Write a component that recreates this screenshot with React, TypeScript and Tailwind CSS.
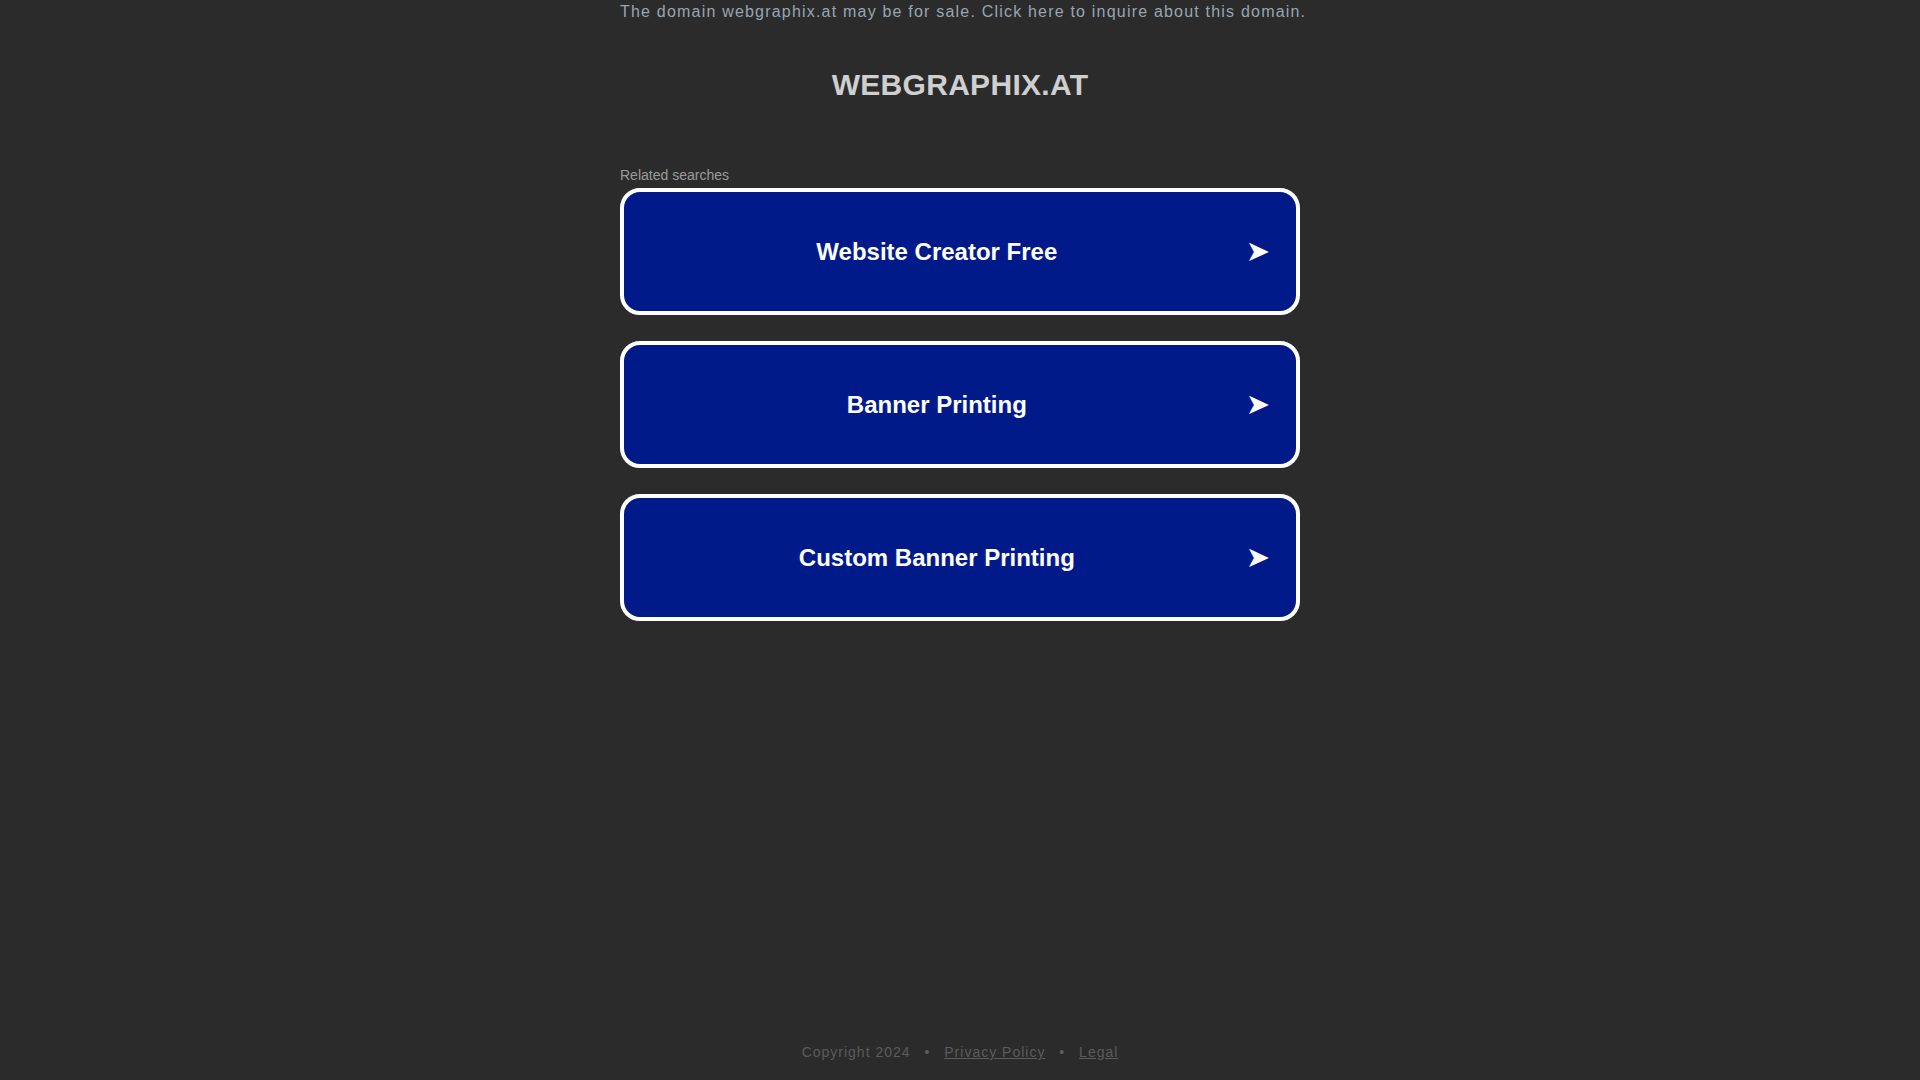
const searches = ['Website Creator Free', 'Banner Printing', 'Custom Banner Printing'];

const App = () => {
  return (
    <div className="min-h-screen bg-[#2b2b2b] flex flex-col font-['Liberation_Sans',Arial,sans-serif]">
      <div className="w-[680px] mx-auto flex-1">
        <div className="text-[16px] leading-[24px] tracking-[1.2px] text-[#97a6b2] whitespace-nowrap">
          The domain webgraphix.at may be for sale. Click here to inquire about this domain.
        </div>

        <h1 className="mt-[43px] text-center text-[30px] leading-[36px] font-bold tracking-[0.3px] text-[#cfcfcf]">
          WEBGRAPHIX.AT
        </h1>

        <div className="mt-[63px] text-[14px] leading-[18px] text-[#9b9b9b]">Related searches</div>

        <div className="mt-[4px] flex flex-col gap-[26px]">
          {searches.map((s) => (
            <a
              key={s}
              href="#"
              className="h-[127px] flex items-center bg-[#011a8a] border-[4px] border-white rounded-[20px] pl-[4px] pr-[26px]"
            >
              <span className="flex-1 text-center text-[24px] font-bold text-white">{s}</span>
              <span className="text-[29px] leading-none text-white font-['DejaVu_Sans',sans-serif]">➤</span>
            </a>
          ))}
        </div>
      </div>

      <div className="pb-[19px] text-center text-[14px] leading-[18px] tracking-[1px] text-[#5c5c5c]">
        Copyright 2024 <span className="mx-[9px]">•</span>{' '}
        <a href="#" className="underline">Privacy Policy</a>{' '}
        <span className="mx-[9px]">•</span>{' '}
        <a href="#" className="underline">Legal</a>
      </div>
    </div>
  );
};

export default App;
